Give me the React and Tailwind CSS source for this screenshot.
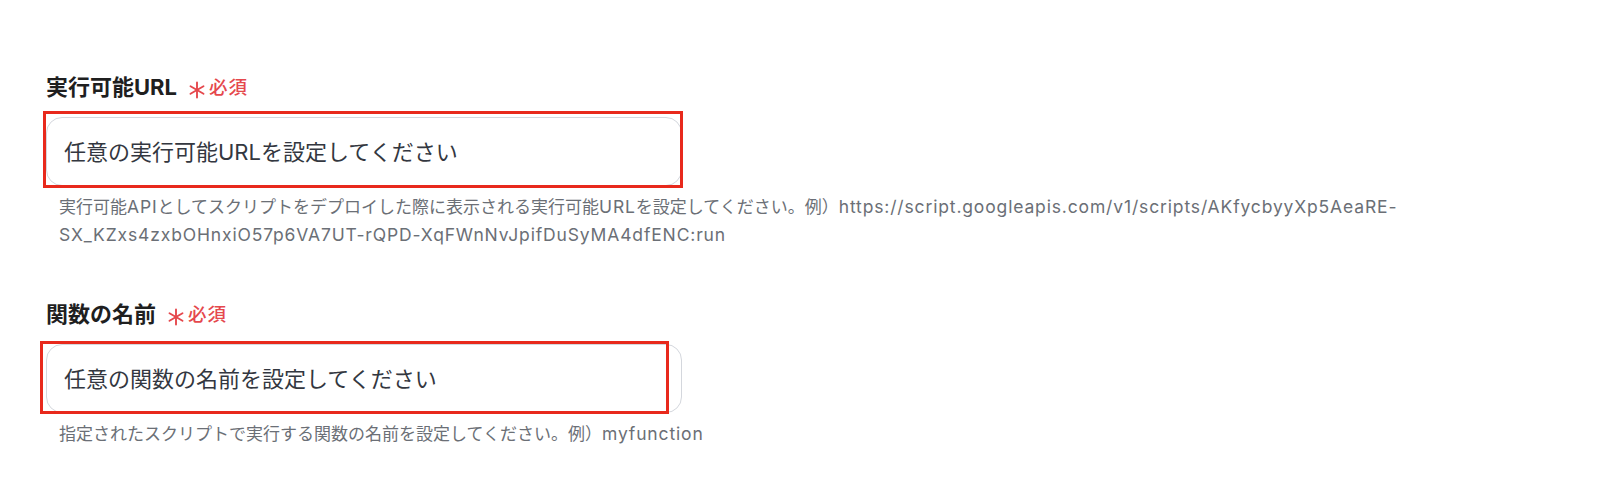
import React from 'react';

const Asterisk = () => (
    <svg width="18" height="18" viewBox="0 0 18 18" className="mt-[6px] text-[#e5484d]" aria-hidden="true">
        <g stroke="currentColor" strokeWidth="1.9" strokeLinecap="round">
            <line x1="9" y1="1.5" x2="9" y2="16.5" />
            <line x1="2.5" y1="5.2" x2="15.5" y2="12.8" />
            <line x1="2.5" y1="12.8" x2="15.5" y2="5.2" />
        </g>
    </svg>
);

// latin runs in the help text sit a bit larger and looser than the kana
const Latin = ({ children }) => (
    <span className="text-[17.5px] tracking-[0.85px]">{children}</span>
);

const Field = ({ label, placeholder, children, highlight }) => (
    <div className="flex flex-col">
        <div className="flex items-center h-[32px]">
            <span className="text-[22px] font-bold text-[#1f1f1f] leading-[32px]">{label}</span>
            <span className="ml-[11px] flex items-center gap-[3px]">
                <Asterisk />
                <span className="text-[18.5px] tracking-[1px] font-medium text-[#e5484d] leading-[32px]">必須</span>
            </span>
        </div>
        <div className="relative mt-[14px] w-[636px]">
            <div className="h-[69px] rounded-[16px] border border-[#d4d7dd] bg-white flex items-center px-[17px]">
                <span className="text-[22px] text-[#333740] leading-none">{placeholder}</span>
            </div>
            <div className={`absolute border-[3px] border-[#e8291c] ${highlight}`} />
        </div>
        <p className="mt-[7px] pl-[13px] w-[1380px] text-[17px] leading-[28px] text-[#6b6f76]">{children}</p>
    </div>
);

export default function App() {
    return (
        <div
            className="w-[1600px] h-[494px] bg-white pl-[46px] pt-[71px] flex flex-col gap-[49px] overflow-hidden"
            style={{ fontFamily: 'Inter, "Noto Sans CJK JP", sans-serif' }}
        >
            <Field
                label="実行可能URL"
                placeholder="任意の実行可能URLを設定してください"
                highlight="-left-[3px] -top-[6px] -right-[1px] -bottom-[2px]"
            >
                実行可能<Latin>API</Latin>としてスクリプトをデプロイした際に表示される実行可能<Latin>URL</Latin>を設定してください。例）<Latin>https://script.googleapis.com/v1/scripts/AKfycbyyXp5AeaRE-SX_KZxs4zxbOHnxiO57p6VA7UT-rQPD-XqFWnNvJpifDuSyMA4dfENC:run</Latin>
            </Field>
            <Field
                label="関数の名前"
                placeholder="任意の関数の名前を設定してください"
                highlight="-left-[6px] -top-[3px] right-[13px] -bottom-[1px]"
            >
                指定されたスクリプトで実行する関数の名前を設定してください。例）<Latin>myfunction</Latin>
            </Field>
        </div>
    );
}
